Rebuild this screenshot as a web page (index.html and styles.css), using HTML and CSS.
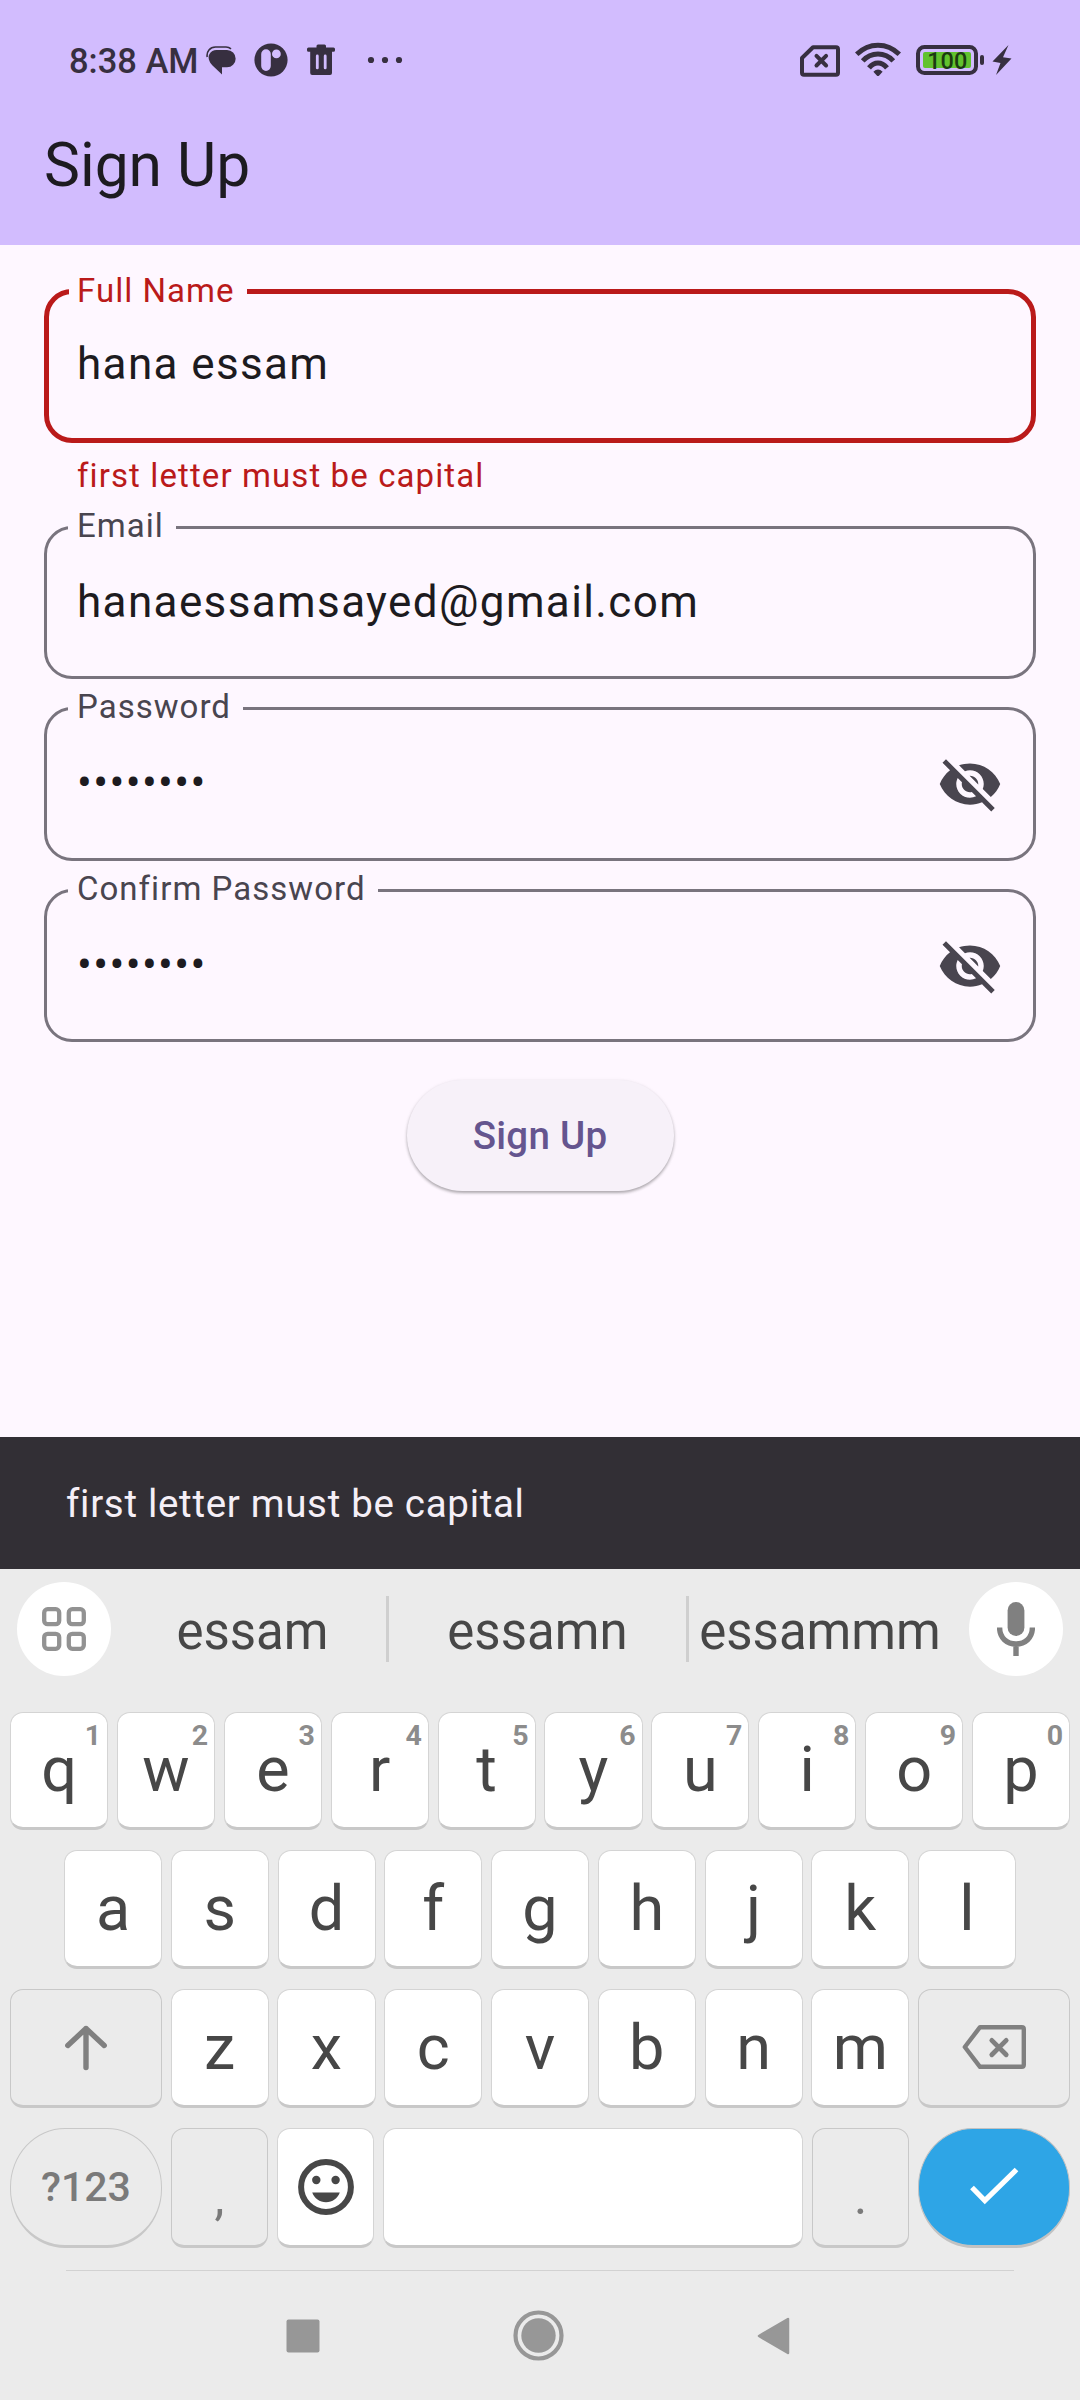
FILE: index.html
```html
<!DOCTYPE html>
<html lang="en">
<head>
<meta charset="utf-8">
<title>Sign Up</title>
<link rel="stylesheet" href="styles.css">
</head>
<body>
<div class="screen">
  <header class="app-bar">
    <div class="status-bar">
      <span class="clock">8:38 AM</span>
      <svg class="status-icon chat" width="30" height="30" viewBox="0 0 30 30"><path d="M10.500 5H21A8.500 8.500 0 0 1 21 22.300H16V29.500L6.500 20.500C3 17 1.500 12 3.500 9C5 6.500 7.500 5 10.500 5Z"/><path d="M1.200 12C.300 6.500 4 2 9.500 2H20C22 2 23.500 2.500 25 3.800" fill="none" stroke="#372f40" stroke-width="1.600"/></svg>
      <svg class="status-icon parking" width="34" height="34" viewBox="0 0 34 34"><path fill-rule="evenodd" d="M17 .4a16.600 16.600 0 1 0 0 33.200a16.600 16.600 0 1 0 0-33.200ZM12 6.300a4.800 4.800 0 0 1 4.800 4.800v12a4.800 4.800 0 0 1-9.600 0v-12A4.800 4.800 0 0 1 12 6.300ZM22.400 6.500a4.400 4.400 0 1 1 0 8.800a4.400 4.400 0 1 1 0-8.800Z"/></svg>
      <svg class="status-icon trash" width="28" height="31" viewBox="0 0 28 31"><path fill-rule="evenodd" d="M9.500 3.500V2q0-1.500 1.500-1.500h6.500q1.500 0 1.500 1.500v1.500h7.500q1.500 0 1.500 1.500v1.200q0 1.500-1.500 1.500H25V29q0 2-2 2H5.200q-2 0-2-2V7.700H1.500Q0 7.700 0 6.200V5q0-1.500 1.500-1.500ZM10.300 10.500q-1.400 0-1.400 1.400v12q0 1.400 1.400 1.400t1.400-1.400v-12q0-1.400-1.400-1.400ZM18.200 10.500q-1.400 0-1.400 1.400v12q0 1.400 1.400 1.400t1.400-1.400v-12q0-1.400-1.400-1.400Z"/></svg>
      <svg class="status-icon more" width="36" height="8" viewBox="0 0 36 8"><circle cx="4" cy="4" r="3.100"/><circle cx="18" cy="4" r="3.100"/><circle cx="32" cy="4" r="3.100"/></svg>
      <span class="spacer"></span>
      <svg class="status-icon sim" width="40" height="32" viewBox="0 0 40 32"><path d="M13 2.200H36Q38 2.200 38 4.200V27.800Q38 29.800 36 29.800H4Q2 29.800 2 27.800V13Z" fill="none" stroke="#372f40" stroke-width="4" stroke-linejoin="round"/><path d="M16.500 10.900L26.100 20.500M26.100 10.900L16.500 20.500" stroke="#372f40" stroke-width="4" stroke-linecap="round"/></svg>
      <svg class="status-icon wifi" width="46" height="35" viewBox="0 0 46 35"><g fill="none" stroke="#372f40" stroke-width="5"><path d="M1.700 12.300Q11 3.200 23 3.200T44.300 12.300"/><path d="M7.700 18.900Q14 12 23 12T38.300 18.900"/><path d="M14 25.900Q18 21 23 21T32 25.900"/></g><path d="M18.400 29.700Q23 25.500 27.600 29.700L24.200 33.500Q23 34.500 21.800 33.500Z"/></svg>
      <svg class="status-icon battery" width="69" height="30" viewBox="0 0 69 30"><rect x="2" y="2" width="58" height="26" rx="6.500" fill="none" stroke="#372f40" stroke-width="4"/><rect x="7" y="7" width="48" height="16" rx="2" fill="#62c22e"/><text x="31.300" y="23.800" class="battery-level" text-anchor="middle">100</text><rect x="64" y="10" width="4" height="10" rx="2"/></svg>
      <svg class="status-icon bolt" width="20" height="30" viewBox="0 0 20 30"><path d="M16.500 0L.500 16.500L8.500 18L4 30L19.500 13.500L11 12.200Z"/></svg>
    </div>
    <h1 class="title">Sign Up</h1>
  </header>

  <main class="form">
    <fieldset class="field field-error">
      <legend>Full Name</legend>
      <div class="value">hana essam</div>
    </fieldset>
    <p class="error-text">first letter must be capital</p>
    <fieldset class="field email">
      <legend>Email</legend>
      <div class="value">hanaessamsayed@gmail.com</div>
    </fieldset>
    <fieldset class="field password">
      <legend>Password</legend>
      <div class="secret">
        <div class="value">••••••••</div>
        <svg class="eye" viewBox="0 0 24 24"><path d="M12 7c2.760 0 5 2.240 5 5 0 .65-.13 1.260-.36 1.830l2.920 2.920c1.510-1.260 2.700-2.890 3.430-4.750-1.730-4.390-6-7.500-11-7.500-1.400 0-2.740.25-3.980.7l2.160 2.160C10.740 7.130 11.350 7 12 7zM2 4.270l2.280 2.280.46.46C3.080 8.300 1.780 10.020 1 12c1.730 4.390 6 7.500 11 7.500 1.550 0 3.030-.3 4.380-.84l.42.42L19.730 22 21 20.730 3.270 3 2 4.270zM7.530 9.800l1.550 1.550c-.05.21-.08.43-.08.65 0 1.660 1.340 3 3 3 .22 0 .44-.03.65-.08l1.550 1.550c-.67.33-1.410.53-2.200.53-2.760 0-5-2.240-5-5 0-.79.2-1.530.53-2.200zm4.310-.78l3.150 3.150.02-.16c0-1.660-1.340-3-3-3l-.17.01z"/></svg>
      </div>
    </fieldset>
    <fieldset class="field confirm">
      <legend>Confirm Password</legend>
      <div class="secret">
        <div class="value">••••••••</div>
        <svg class="eye" viewBox="0 0 24 24"><path d="M12 7c2.760 0 5 2.240 5 5 0 .65-.13 1.260-.36 1.830l2.920 2.920c1.510-1.260 2.700-2.890 3.430-4.750-1.730-4.390-6-7.500-11-7.500-1.400 0-2.740.25-3.980.7l2.160 2.160C10.740 7.130 11.350 7 12 7zM2 4.270l2.280 2.280.46.46C3.080 8.300 1.780 10.020 1 12c1.730 4.390 6 7.500 11 7.500 1.550 0 3.030-.3 4.380-.84l.42.42L19.730 22 21 20.730 3.270 3 2 4.270zM7.530 9.800l1.550 1.550c-.05.21-.08.43-.08.65 0 1.660 1.340 3 3 3 .22 0 .44-.03.65-.08l1.550 1.550c-.67.33-1.410.53-2.200.53-2.760 0-5-2.240-5-5 0-.79.2-1.530.53-2.200zm4.310-.78l3.150 3.150.02-.16c0-1.660-1.340-3-3-3l-.17.01z"/></svg>
      </div>
    </fieldset>
    <button class="submit" type="button">Sign Up</button>
  </main>

  <div class="snackbar">first letter must be capital</div>

  <section class="keyboard">
    <div class="suggestions">
      <span class="round"><svg width="44" height="44" viewBox="0 0 44 44" fill="none" stroke="#929292" stroke-width="4.300"><rect x="2.200" y="2.200" width="15" height="15" rx="3.500"/><rect x="26.800" y="2.200" width="15" height="15" rx="3.500"/><rect x="2.200" y="26.800" width="15" height="15" rx="3.500"/><rect x="26.800" y="26.800" width="15" height="15" rx="3.500"/></svg></span>
      <span class="word first">essam</span>
      <span class="word middle">essamn</span>
      <span class="word last">essammm</span>
      <span class="round"><svg width="38" height="54" viewBox="0 0 38 54"><rect x="10.600" y="0" width="16.800" height="34" rx="8.400" fill="#808080"/><path d="M2.600 25.500C2.600 36 10 42 19 42S35.400 36 35.400 25.500M19 42V54" fill="none" stroke="#808080" stroke-width="5.400"/></svg></span>
    </div>
    <div class="keys">
      <div class="row">
        <span class="key">q<sup>1</sup></span><span class="key">w<sup>2</sup></span><span class="key">e<sup>3</sup></span><span class="key">r<sup>4</sup></span><span class="key">t<sup>5</sup></span><span class="key">y<sup>6</sup></span><span class="key">u<sup>7</sup></span><span class="key">i<sup>8</sup></span><span class="key">o<sup>9</sup></span><span class="key">p<sup>0</sup></span>
      </div>
      <div class="row home">
        <span class="key">a</span><span class="key">s</span><span class="key">d</span><span class="key">f</span><span class="key">g</span><span class="key">h</span><span class="key">j</span><span class="key">k</span><span class="key">l</span>
      </div>
      <div class="row">
        <span class="key wide gray"><svg width="44" height="46" viewBox="0 0 44 46" fill="none" stroke="#808080" stroke-width="5.400" stroke-linecap="round" stroke-linejoin="round"><path d="M22 3.500V42.500M3.800 20.500L22 3.500L40.200 20.500"/></svg></span><span class="key">z</span><span class="key">x</span><span class="key">c</span><span class="key">v</span><span class="key">b</span><span class="key">n</span><span class="key">m</span><span class="key wide gray"><svg class="backspace" width="64" height="44" viewBox="0 0 64 44" fill="none" stroke="#808080" stroke-linecap="round" stroke-linejoin="round"><path stroke-width="4.400" d="M18 2.200H59.800Q61.800 2.200 61.800 4.200V39.800Q61.800 41.800 59.800 41.800H18L2.800 22Z"/><path stroke-width="4.800" d="M29.800 15.400L44.200 29.800M44.200 15.400L29.800 29.800"/></svg></span>
      </div>
      <div class="row bottom">
        <span class="key wide gray pill symbols">?123</span><span class="key gray punct">,</span><span class="key"><svg width="56" height="56" viewBox="0 0 56 56" fill="#474747"><circle cx="28" cy="28" r="24.900" fill="none" stroke="#474747" stroke-width="6"/><circle cx="18.300" cy="21" r="4.200"/><circle cx="37.600" cy="21" r="4.200"/><path d="M14.200 33.500H41.800C39.500 39.500 34.500 43.200 28 43.200S16.500 39.500 14.200 33.500Z"/></svg></span><span class="key space"></span><span class="key gray punct">.</span><span class="key wide pill enter"><svg width="50" height="40" viewBox="0 0 50 40" fill="none" stroke="#fff" stroke-width="5.200"><path d="M3 20.500L15.800 33.600L47.500 2.500"/></svg></span>
      </div>
    </div>
    <nav class="nav">
      <svg width="34" height="34" viewBox="0 0 34 34"><rect x=".5" y=".5" width="33" height="33" rx="2" fill="#979797"/></svg>
      <svg width="51" height="51" viewBox="0 0 51 51"><circle cx="25.500" cy="25.500" r="23" fill="none" stroke="#979797" stroke-width="4.200"/><circle cx="25.500" cy="25.500" r="17.200" fill="#979797"/></svg>
      <svg width="33" height="38" viewBox="0 0 33 38"><path d="M2 19L31 2V36Z" fill="#979797" stroke="#979797" stroke-width="2.500" stroke-linejoin="round"/></svg>
    </nav>
  </section>
</div>
</body>
</html>
```
FILE: styles.css
```css
* { box-sizing: border-box; }

body {
  margin: 0;
  font-family: Roboto, "Liberation Sans", sans-serif;
}

svg { display: block; flex: none; }

.screen {
  display: flex;
  flex-direction: column;
  width: 1080px;
  height: 2400px;
  overflow: hidden;
  background: #fef7ff;
}

.app-bar {
  height: 245px;
  background: #d2bcfe;
}

.status-bar {
  display: flex;
  align-items: center;
  height: 119px;
  padding: 0 68px 0 69px;
}

.clock {
  width: 137px;
  margin-top: 2px;
  font-size: 34.5px;
  font-weight: 500;
  white-space: nowrap;
  color: #372f40;
}

.status-icon { fill: #372f40; }
.parking { margin-left: 18px; }
.trash { margin-left: 19px; }
.more { margin-left: 32px; }
.spacer { flex: 1; }
.sim { margin-top: 2px; }
.wifi { margin-left: 15px; }
.battery { margin-left: 15px; }
.bolt { margin-left: 7px; }

.battery-level {
  font-size: 23.500px;
  font-weight: 500;
  fill: #1c3a12;
}

.title {
  margin: 11px 0 0 44px;
  font-size: 60.500px;
  font-weight: 400;
  line-height: 72px;
  color: #1d1b20;
}

.form {
  display: flex;
  flex-direction: column;
  height: 1192px;
  padding: 27px 44px 0;
}

.field {
  flex: none;
  min-width: 0;
  height: 171px;
  margin: 0;
  padding: 0 30px 0 21px;
  border: 3px solid #79747e;
  border-radius: 28px;
}

.field legend {
  height: 39px;
  padding: 0 12px 0 9px;
  font-size: 33px;
  line-height: 35px;
  letter-spacing: 1.030px;
  color: #49454f;
}

.value {
  padding: 29px 0 0 9px;
  font-size: 44px;
  line-height: 52px;
  letter-spacing: 1.375px;
  color: #1d1b20;
}

.field-error {
  padding-left: 20px;
  border: 5px solid #ba1a1a;
}

.field-error legend {
  padding-left: 8px;
  line-height: 37px;
  color: #ba1a1a;
}

.field-error .value { padding: 27px 0 0 8px; }

.error-text {
  height: 65px;
  margin: 0;
  padding: 13px 0 0 33px;
  font-size: 33px;
  line-height: 39px;
  letter-spacing: 1.100px;
  color: #ba1a1a;
}

.password {
  height: 172px;
  margin-top: 10px;
}

.confirm { margin-top: 10px; }

.secret {
  display: flex;
  justify-content: space-between;
}

.eye {
  width: 66px;
  height: 66px;
  margin-top: 23px;
  fill: #49454f;
}

.submit {
  align-self: center;
  width: 267px;
  height: 111px;
  margin: 38px 0 0;
  padding: 0;
  border: 0;
  border-radius: 56px;
  background: #f7f1f9;
  box-shadow: 0 2px 3px rgba(0, 0, 0, .28), 0 1px 4px rgba(0, 0, 0, .08);
  font: 500 38.500px Roboto, sans-serif;
  letter-spacing: .275px;
  color: #65558f;
}

.snackbar {
  height: 132px;
  padding-left: 66px;
  background: #322f35;
  font-size: 38.500px;
  line-height: 133px;
  letter-spacing: .690px;
  color: #f5eff7;
}

.keyboard {
  height: 831px;
  background: #ebebeb;
}

.suggestions {
  display: flex;
  align-items: center;
  height: 119px;
  padding: 0 17px;
}

.round {
  display: flex;
  align-items: center;
  justify-content: center;
  width: 94px;
  height: 94px;
  border-radius: 50%;
  background: #fff;
}

.word {
  height: 66px;
  font-size: 51px;
  line-height: 71px;
  text-align: center;
  color: #474747;
}

.first { width: 275px; padding-left: 8px; }
.middle { width: 303px; border: solid #cfcfcf; border-width: 0 3px; }
.last { width: 280px; padding-right: 18px; }

.keys {
  display: flex;
  flex-direction: column;
  gap: 20px;
  margin-top: 24px;
  padding: 0 10px;
}

.row {
  display: flex;
  gap: 8.700px;
  height: 119px;
}

.row:first-child { height: 118px; }
.row.bottom { height: 120px; }
.home { padding: 0 54px; }

.key {
  position: relative;
  display: flex;
  flex: 1 1 0;
  align-items: center;
  justify-content: center;
  border: 1px solid #d4d4d4;
  border-bottom: 3px solid #c8c8c8;
  border-radius: 13px;
  background: #fff;
  font-size: 63px;
  line-height: 74px;
  color: #474747;
}

.key sup {
  position: absolute;
  top: 7px;
  right: 6px;
  font-size: 28.500px;
  font-weight: 700;
  line-height: 32px;
  color: #8c8c8c;
}

.wide { flex: 0 0 152px; }
.gray { background: #ebebeb; border-color: #c8c8c8; }
.space { flex: 0 0 420px; }
.pill { border-radius: 55px / 59px; }
.backspace { margin-top: -1px; }

.symbols {
  font-size: 41px;
  font-weight: 500;
  color: #7a7a7a;
}

.punct {
  padding-top: 20px;
  font-size: 50px;
  color: #7a7a7a;
}

.enter { background: #2ea5e6; border-color: #c2c2c2; }

.nav {
  display: flex;
  align-items: center;
  justify-content: space-between;
  height: 130px;
  margin: 22px 66px 0;
  padding: 0 224px 0 220px;
  border-top: 1px solid #d2d2d2;
}
```
